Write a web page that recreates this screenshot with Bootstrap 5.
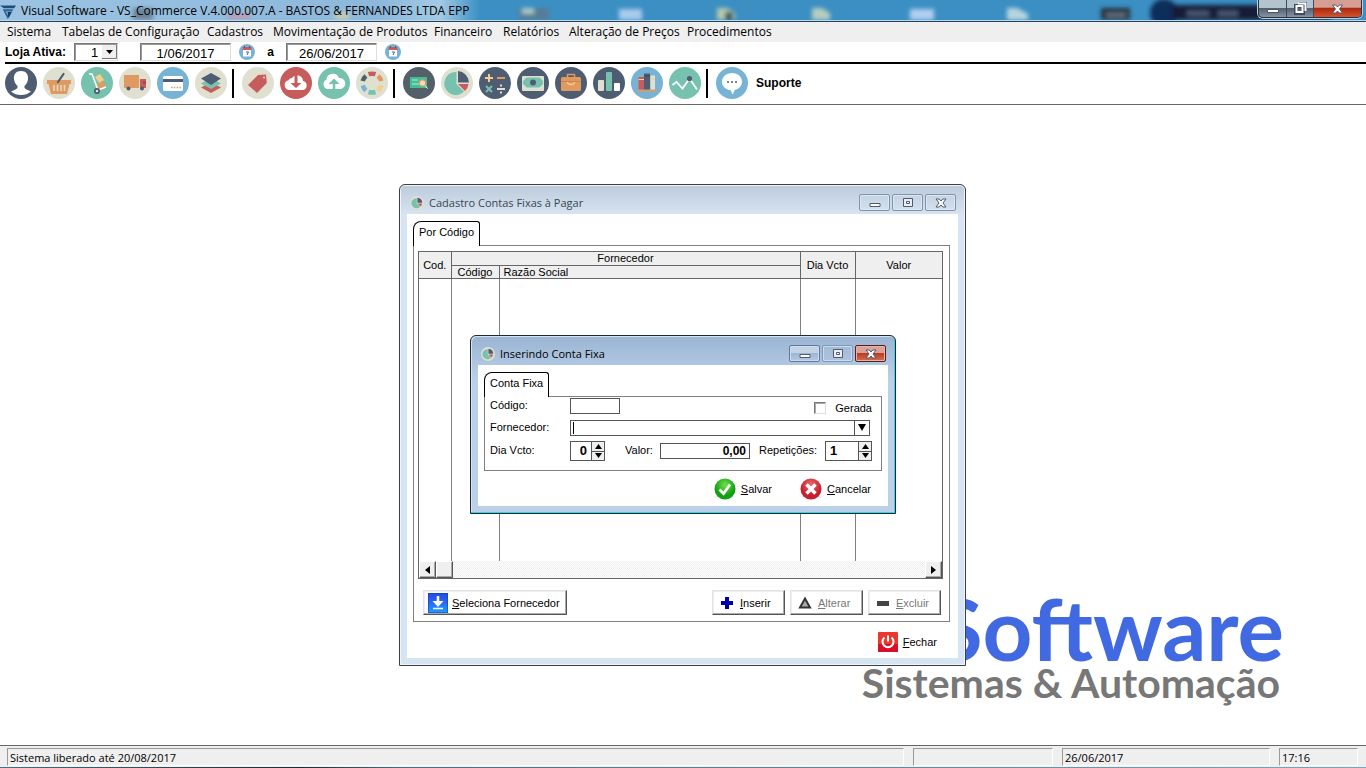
<!DOCTYPE html>
<html lang="pt-BR">
<head>
<meta charset="utf-8">
<meta name="viewport" content="width=device-width, initial-scale=1">
<title>Visual Software - VS_Commerce</title>
<link href="https://cdn.jsdelivr.net/npm/bootstrap@5.3.0/dist/css/bootstrap.min.css" rel="stylesheet">
<style>
  body { font: 12px/16px "Liberation Sans", Arial, sans-serif; color: #000; background: #fff; overflow: hidden; }
  button, input, select { font: inherit; color: inherit; }
  svg { display: block; flex: none; }
  .ui-font { font-family: "Open Sans", "Noto Sans", sans-serif; font-size: 12px; }
  .ui-small { font-size: 11px; }
  .form-font { font-size: 11px; line-height: 14px; }

  /* application title bar */
  .app-title { height: 22px; position: relative; overflow: hidden; border-bottom: 1px solid #23445f; box-shadow: inset 0 -1px #b9d6ea;
    background: linear-gradient(90deg, #9cc3e2 0, #8cb8db 380px, #a3cae4 440px, #3b8fc3 480px); }
  .app-title > * { position: relative; }
  .app-title .glass { position: absolute; left: 0; top: 0; }
  .app-controls { border: 1px solid #26333f; border-top: 0; border-radius: 0 0 5px 5px; height: 18px; overflow: hidden; box-shadow: 0 0 0 1px #b9cede; }
  .app-controls button { border: 0; padding: 0; height: 17px; display: flex; align-items: center; justify-content: center;
    background: linear-gradient(#b4c4ce 0 45%, #52606f 50%, #8794a4); border-right: 1px solid #3d4b59; }
  .app-controls .quit { background: linear-gradient(#d69d92 0 42%, #ab2a12 50%, #d8532c); border-right: 0; }

  .app-menu { height: 20px; background: #efefef; padding-left: 7px; display: grid; align-items: center;
    grid-template-columns: 55px 145px 66px 161px 69px 66px 118px auto; }
  .app-menu a { color: #000; text-decoration: none; white-space: nowrap; }

  .filters { height: 20px; padding-left: 5px; }
  .sunken { border: 1px solid #ddd; border-top-color: #777; border-left-color: #777; box-shadow: inset 1px 1px #999; background: #fff; border-radius: 0; height: 18px; }
  .filters input { width: 91px; font-size: 13px; text-align: center; padding: 2px 0 0; }
  .store { width: 44px; position: relative; margin-right: 22px; }
  .store select { appearance: none; width: 44px; padding: 1px 0 0 16px; font-size: 13px; line-height: 14px; }
  .store svg { position: absolute; right: 1px; top: 2px; pointer-events: none; }
  .icon-btn { border: 0; background: none; padding: 0; display: flex; }
  .tools { border-top: 2px solid #000; margin-left: 5px; padding: 3px 0 5px; gap: 6px; }
  .tools-line { border-bottom: 1px solid #666; }
  .tools .bar { width: 2px; height: 29px; background: #000; margin: 0 2px 0 -1px; }

  /* child windows */
  .win { position: absolute; border: 1px solid #3c4043; border-radius: 6px 6px 0 0; padding: 0 7px 7px; background: #d7e4f2;
    box-shadow: inset 0 0 0 1px #eef4fa; }
  .win-list { left: 399px; top: 79px; width: 567px; background: linear-gradient(#bccbda, #d7e4f2 30px); color: #3c4650; }
  .win-form { left: 470px; top: 230px; width: 426px; border-color: #1c2a2c; background: linear-gradient(#9ab4d2, #bbd1ea 45px);
    box-shadow: inset -1px -1px #35d3ee, inset 1px 1px #d5e4f2; }
  .win-head { height: 29px; padding: 7px 2px 0 3px; }
  .win-title { padding-left: 5px; line-height: 21px; }
  .win-head button { width: 31px; height: 17px; padding: 0; border: 1px solid #8292a8; border-radius: 2px; background: transparent;
    box-shadow: inset 0 0 0 1px #dbe7f3; display: flex; align-items: center; justify-content: center; margin-top: 2px; }
  .win-form .win-head button { border-color: #63799a; background: linear-gradient(#c3d3e6 45%, #9db6d3 50%, #b4cae2); box-shadow: inset 0 0 0 1px #ccdcec; }
  .win-form .win-head .idle { border-color: #7f97b8; background: transparent; }
  .win-form .win-head .shut { border-color: #591d1a; background: linear-gradient(#dba096 45%, #ba3c25 50%, #d17252); box-shadow: inset 0 0 0 1px #e3b5aa; }
  .client { background: #fff; color: #000; padding: 7px 8px 0 6px; }
  .tab-top { position: relative; z-index: 1; height: 25px; border: 1px solid #000; border-bottom: 0; border-radius: 8px 3px 0 0; background: #fff; padding: 3px 0 0 5px; margin-bottom: -1px; white-space: nowrap; }
  .pane { border: 1px solid #808080; }

  .win-list .client { height: 444px; }
  .win-list .tab-top { width: 67px; }
  .win-list .pane { height: 377px; padding: 5px 6px 0 4px; }
  .grid-box { border: 1px solid #666; height: 328px; }
  .grid-box table { width: 100%; table-layout: fixed; border-collapse: collapse; }
  .grid-box th { background: #efefef; font-weight: 400; text-align: center; padding: 0; border: 1px solid #666; line-height: 12px; height: 13px; overflow: hidden; white-space: nowrap; }
  .grid-box td { border: 1px solid #808080; border-width: 0 1px; height: 283px; padding: 0; }
  .grid-box tr > :first-child.edge { border-left: 0; }
  .grid-box .edge-r { border-right: 0; }
  .grid-box thead tr:first-child th { border-top: 0; }
  .track { height: 17px; background: repeating-conic-gradient(#eee 0 25%, #fff 0 50%) 0 0 / 2px 2px; }
  .track button, .track .thumb { width: 17px; height: 17px; padding: 0; border: 1px solid #fff; border-right-color: #555; border-bottom-color: #555; background: #efefef; box-shadow: inset -1px -1px #aaa;
    display: flex; align-items: center; justify-content: center; }
  .raised { height: 25px; background: #fff; border: 1px solid #e3e3e3; border-right-color: #555; border-bottom-color: #555; box-shadow: inset -1px -1px #aaa, inset 1px 1px #eee; padding: 0; display: flex; align-items: center; }
  .raised:disabled { color: #777; }
  .act { width: 73px; padding-left: 7px; gap: 6px; }
  .act svg { width: 14px; height: 14px; }
  .act-row { margin-top: 11px; padding: 0 2px 0 5px; gap: 5px; }
  .pick { width: 144px; padding-left: 4px; gap: 4px; }
  .plain { border: 0; background: none; padding: 0; display: flex; align-items: center; gap: 5px; }

  .win-form .client { height: 141px; padding-right: 6px; }
  .win-form .tab-top { width: 65px; }
  .win-form .pane { height: 75px; padding: 0 9px 0 5px; }
  .line-row { display: flex; align-items: center; height: 22px; }
  .line-row label { margin-top: -2px; }
  .cap { width: 80px; flex: none; }
  .boxed { border: 1px solid #555; background: #fff; border-radius: 0; height: 16px; padding: 0 3px; min-width: 0; }
  .num { font-weight: 700; font-size: 12px; }
  .stepper { border: 1px solid #555; height: 20px; display: flex; }
  .stepper input { border: 0; padding: 0; font-weight: 700; font-size: 13px; background: #fff; min-width: 0; }
  .stepper .keys { width: 13px; border-left: 1px solid #555; display: flex; flex-direction: column; background: #efefef; }
  .stepper .keys button { flex: 1; border: 0; padding: 0; background: none; display: flex; align-items: center; justify-content: center; }
  .stepper .keys button + button { border-top: 1px solid #555; }
  .tick { appearance: none; width: 12px; height: 12px; margin: 4px 9px 0 0; border: 1px solid #ddd; border-top-color: #777; border-left-color: #777; box-shadow: inset 1px 1px #aaa; }
  .line-row .tick + label { margin-top: 3px; }
  .caret-mark { position: absolute; left: 3px; top: 2px; width: 1px; height: 12px; background: #000; }

  /* wallpaper logo */
  .brand { font-family: Lato, sans-serif; font-weight: 700; padding: 0 82px 43px 0; }
  .brand-name { font-size: 87px; line-height: 72px; color: #4169e1; }
  .brand-sub { font-size: 41px; line-height: 38px; color: #777; white-space: nowrap; margin-right: 4px; }

  .status { background: #efefef; border-top: 1px solid #666; padding: 2px 8px 1px 7px; height: 22px; display: grid; grid-template-columns: 897px 1fr 208px 79px; gap: 9px; }
  .status > div { border: 1px solid #fff; border-top-color: #999; border-left-color: #999; padding-left: 2px; line-height: 17px; height: 18px; white-space: nowrap; }
  .under { height: 1px; background: linear-gradient(90deg, #4a6e84, #1b2b38 300px, #4a6e84 400px, #7ba4bd); }
</style>
</head>
<body class="d-flex flex-column vh-100">

<svg width="0" height="0" class="position-absolute" aria-hidden="true">
  <defs>
    <symbol id="pie" viewBox="0 0 32 32"><circle cx="16" cy="16" r="16" fill="#e0e0d1"/><path d="M15.500 5a11.500 11.500 0 1 0 7.500 19.500L15.500 17z" fill="#76c2af"/><path d="M17 4v11.500h11A12 12 0 0 0 17 4z" fill="#4f5d73"/><path d="M17 17h10.500a11 11 0 0 1-3.500 7z" fill="#c75c5c"/></symbol>
    <symbol id="cal" viewBox="0 0 16 16"><circle cx="8" cy="8" r="8" fill="#77b3d4"/><path d="M4 5h8v7.500H4z" fill="#fff"/><path d="M3.500 3h9v3h-9z" fill="#c75c5c"/><path d="M5.500 2v2M10.500 2v2" stroke="#4f5d73"/><path d="M7 8h2.500L8 11" fill="none" stroke="#4f5d73"/></symbol>
    <symbol id="g-min" viewBox="0 0 12 12"><path d="M1 6.500h10v3H1z" fill="#fff" stroke="#515a6e"/></symbol>
    <symbol id="g-max" viewBox="0 0 12 12"><path d="M1.500 1.500h9v8h-9z" fill="#e8eef5" stroke="#515a6e"/><path d="M4.500 4.500h3v2h-3z" fill="#fff" stroke="#515a6e"/></symbol>
    <symbol id="g-x" viewBox="0 0 12 12"><path d="M1 2h3.200L6 4l1.800-2H11L8 6l3 4H7.800L6 8l-1.800 2H1l3-4z" fill="#fff" stroke="#515a6e"/></symbol>
  </defs>
</svg>

<header>
  <div class="app-title d-flex align-items-start ui-font">
    <svg class="glass" width="1366" height="20" viewBox="0 0 1366 20" aria-hidden="true"><defs><filter id="soft" x="-20%" y="-50%" width="140%" height="200%"><feGaussianBlur stdDeviation="2"/></filter></defs>
      <g filter="url(#soft)"><path d="M133 8h20v12h-20z" fill="#6d8396"/><path d="M228 13h22v7h-22z" fill="#b49fb8"/><path d="M335 12h14v8h-14z" fill="#c5cbb4"/><path d="M519 8h30v12h-30z" fill="#577d95"/><path d="M522 8h12v6h-12z" fill="#a9c8c8"/><path d="M619 9h23v11h-23z" fill="#a9cbee"/><path d="M717 8h10l8 5v7h-18z" fill="#b6c9ae"/><path d="M725 12h8v8h-8z" fill="#43565c"/><path d="M812 8h10l8 5v7h-18z" fill="#b5cdc0"/><path d="M910 9h24v11h-24z" fill="#b0cff0"/><path d="M1007 8h10l11 6v6h-21z" fill="#b8d4df"/><path d="M1101 8h29v12h-29z" fill="#26333f"/><path d="M1106 13h20v4h-20z" fill="#66727b"/><circle cx="1164" cy="13" r="14" fill="#0d2f5a"/><path d="M1172 5h160v15h-160z" fill="#151f38"/><path d="M1187 11h22v5h-22zM1218 11h20v5h-20z" fill="#4b5a74"/></g></svg>
    <svg class="mt-1" width="17" height="16" viewBox="0 0 18 16"><path d="M0 1h17l-2 3H4z" fill="#1d4e7d"/><path d="M3 5h11l-1 2.500H6l3 5-1 3z" fill="#2a6595"/><path d="M8 8h4.500L9 15z" fill="#123c67"/></svg>
    <span class="flex-grow-1 ps-1" style="line-height:21px">Visual Software - VS_Commerce V.4.000.007.A - BASTOS &amp; FERNANDES LTDA EPP</span>
    <div class="app-controls d-flex me-1">
      <button style="width:28px" aria-label="Minimizar"><svg width="12" height="12" viewBox="0 0 12 12"><path d="M.5 6.500h11v3H.5z" fill="#fff" stroke="#4b5563"/></svg></button>
      <button style="width:27px" aria-label="Restaurar"><svg width="13" height="13" viewBox="0 0 13 13"><path d="M5 1.500h6.500V8M2 4h7v7H2z" fill="none" stroke="#434b5c" stroke-width="4"/><path d="M4 1.500h7.500V9M2.500 4h6v6h-6z" fill="none" stroke="#fff" stroke-width="2"/></svg></button>
      <button class="quit" style="width:47px" aria-label="Fechar programa"><svg width="13" height="12"><use href="#g-x"/></svg></button>
    </div>
  </div>

  <nav class="app-menu ui-font">
    <a href="#">Sistema</a><a href="#">Tabelas de Configuração</a><a href="#">Cadastros</a><a href="#">Movimentação de Produtos</a><a href="#">Financeiro</a><a href="#">Relatórios</a><a href="#">Alteração de Preços</a><a href="#">Procedimentos</a>
  </nav>

  <div class="filters d-flex align-items-center">
    <label for="store" class="fw-bold" style="width:69px">Loja Ativa:</label>
    <div class="store">
      <select id="store" class="sunken"><option>1</option></select>
      <svg width="15" height="14" viewBox="0 0 15 14"><path d="M0 0h15v14H0z" fill="#efefef"/><path d="M0 13.500h14.500V0" fill="none" stroke="#777"/><path d="M4 5h7L7.500 9z"/></svg>
    </div>
    <input class="sunken" aria-label="Data inicial" value="1/06/2017">
    <button class="icon-btn ms-2" aria-label="Calendário inicial"><svg width="16" height="16"><use href="#cal"/></svg></button>
    <label for="until" class="fw-bold text-center" style="width:31px">a</label>
    <input id="until" class="sunken" value="26/06/2017">
    <button class="icon-btn ms-2" aria-label="Calendário final"><svg width="16" height="16"><use href="#cal"/></svg></button>
  </div>

  <div class="tools-line">
  <div class="tools d-flex align-items-center">
    <button class="icon-btn" aria-label="Clientes"><svg width="32" height="32" viewBox="0 0 32 32"><circle cx="16" cy="16" r="16" fill="#4f5d73"/><path d="M16 4c-5 0-7.500 3.500-7 8 .3 3 1.500 5 3.500 7 .5 2-.5 3-2.500 3.700L6 24.500C9 27 12 28 16 28s7-1 10-3.500l-4-1.800c-2-.7-3-1.700-2.500-3.700 2-2 3.200-4 3.500-7 .5-4.500-2-8-7-8z" fill="#fff"/></svg></button>
    <button class="icon-btn" aria-label="Compras"><svg width="32" height="32" viewBox="0 0 32 32"><circle cx="16" cy="16" r="16" fill="#e0e0d1"/><path d="M4 13h24v4h-1.500L24 27H8L5.500 17H4z" fill="#e0995e"/><path d="M11 18v6M14.500 18v6M18 18v6M21.500 18v6" stroke="#e0e0d1" stroke-width="1.500"/><path d="M20.500 7L15 15" stroke="#4f5d73" stroke-width="2.200" stroke-linecap="round"/></svg></button>
    <button class="icon-btn" aria-label="Estoque"><svg width="32" height="32" viewBox="0 0 32 32"><circle cx="16" cy="16" r="16" fill="#76c2af"/><path d="M14 10l5-3 4 6-5 3z" fill="#f5cf87"/><path d="M16 17l6-3 3 6-7 3z" fill="#e0995e"/><path d="M8 7h3l6 16 8-3" fill="none" stroke="#fff" stroke-width="1.500"/><circle cx="16" cy="24" r="2.200" fill="#e0e0d1" stroke="#4f5d73" stroke-width="1.800"/></svg></button>
    <button class="icon-btn" aria-label="Entregas"><svg width="32" height="32" viewBox="0 0 32 32"><circle cx="16" cy="16" r="16" fill="#e0e0d1"/><path d="M5 8h15v13H5z" fill="#e0995e"/><path d="M21 12h6v9h-6z" fill="#c75c5c"/><path d="M24 14h3v3h-3z" fill="#a34b50"/><circle cx="9.500" cy="21.500" r="2" fill="#4f5d73"/><circle cx="23" cy="21.500" r="2" fill="#4f5d73"/></svg></button>
    <button class="icon-btn" aria-label="Cartões"><svg width="32" height="32" viewBox="0 0 32 32"><circle cx="16" cy="16" r="16" fill="#77b3d4"/><rect x="6" y="9" width="20" height="15" rx="1.500" fill="#fff"/><path d="M6 12h20v3H6z" fill="#4f5d73"/><path d="M14 20.500h10" stroke="#e0995e" stroke-width="1.500" stroke-dasharray="1.500 1.300"/></svg></button>
    <button class="icon-btn" aria-label="Camadas"><svg width="32" height="32" viewBox="0 0 32 32"><circle cx="16" cy="16" r="16" fill="#e0e0d1"/><path d="M16 15l10 5.500L16 26 6 20.500z" fill="#c75c5c"/><path d="M16 11l10 5.500L16 22 6 16.500z" fill="#76c2af"/><path d="M16 6l10 5.500L16 18 6 11.500z" fill="#4f5d73"/></svg></button>
    <span class="bar"></span>
    <button class="icon-btn" aria-label="Etiquetas"><svg width="32" height="32" viewBox="0 0 32 32"><circle cx="16" cy="16" r="16" fill="#e0e0d1"/><path d="M6 18L16 8l8-.5.8 8.500L15 26z" fill="#c75c5c"/><circle cx="22" cy="10.500" r="1" fill="#e0e0d1"/></svg></button>
    <button class="icon-btn" aria-label="Baixar"><svg width="32" height="32" viewBox="0 0 32 32"><circle cx="16" cy="16" r="16" fill="#c75c5c"/><path d="M9 23a5 5 0 0 1-.6-9.800A4 4 0 0 1 12 11a6 6 0 0 1 11 3 4.600 4.600 0 0 1 0 9z" fill="#fff"/><path d="M14.500 7h3v9h4L16 21l-5.500-5h4z" fill="#c75c5c"/></svg></button>
    <button class="icon-btn" aria-label="Enviar"><svg width="32" height="32" viewBox="0 0 32 32"><circle cx="16" cy="16" r="16" fill="#76c2af"/><path d="M9 22a5 5 0 0 1-.6-9.300A6.500 6.500 0 0 1 21 11a5.600 5.600 0 0 1 2 11z" fill="#fff"/><path d="M14.800 26v-9h-4.300L16 11.500l5.500 5.500h-4.200v9z" fill="#76c2af"/></svg></button>
    <button class="icon-btn" aria-label="Ciclo"><svg width="32" height="32" viewBox="0 0 32 32"><circle cx="16" cy="16" r="16" fill="#e0e0d1"/><g fill="none" stroke-width="4.500"><path d="M12.500 7.200q3.500-1 7 0" stroke="#c75c5c"/><path d="M22 9q2.500 2 3.300 5" stroke="#e0995e"/><path d="M25.300 18.500q-1 3-3.300 5" stroke="#f5cf87"/><path d="M12.500 25q3.500 1 7 0" stroke="#76c2af"/><path d="M6.700 18.500q1 3 3.300 5" stroke="#77b3d4"/><path d="M10 9q-2.500 2-3.300 5" stroke="#4f5d73"/></g></svg></button>
    <span class="bar"></span>
    <button class="icon-btn" aria-label="Consulta"><svg width="32" height="32" viewBox="0 0 32 32"><circle cx="16" cy="16" r="16" fill="#555f69"/><path d="M7 10h17v11H7z" fill="#3fbf95"/><path d="M9 13h6M9 17h8" stroke="#b8ecd9"/><circle cx="19.500" cy="16" r="3.200" fill="#eadfc5" stroke="#e0995e" stroke-width="1.200"/><path d="M22 18.500l2.500 3" stroke="#fff"/></svg></button>
    <button class="icon-btn" aria-label="Contas"><svg width="32" height="32"><use href="#pie"/></svg></button>
    <button class="icon-btn" aria-label="Cálculos"><svg width="32" height="32" viewBox="0 0 32 32"><circle cx="16" cy="16" r="16" fill="#4f5d73"/><g fill="none" stroke-width="2"><path d="M6 11h8M10 7v8" stroke="#f5cf87"/><path d="M18 11h8" stroke="#e0995e"/><path d="M7 19l6 6M13 19l-6 6" stroke="#76c2af"/><path d="M18 22h8M22 17.500v2M22 24.500v2" stroke="#e0e0d1"/></g></svg></button>
    <button class="icon-btn" aria-label="Caixa"><svg width="32" height="32" viewBox="0 0 32 32"><circle cx="16" cy="16" r="16" fill="#4f5d73"/><rect x="5" y="9" width="22" height="15" rx="1" fill="#e0e0d1"/><path d="M6 10.500h20v10H6z" fill="#76c2af"/><path d="M6 10h4l-4 4zM26 10h-4l4 4zM6 21h4l-4-4zM26 21h-4l4-4z" fill="#e0e0d1"/><circle cx="16" cy="15.500" r="3" fill="#4f5d73"/></svg></button>
    <button class="icon-btn" aria-label="Negócios"><svg width="32" height="32" viewBox="0 0 32 32"><circle cx="16" cy="16" r="16" fill="#4f5d73"/><path d="M12.500 11V7.500h7V11" fill="none" stroke="#e0995e" stroke-width="1.500"/><rect x="6" y="10" width="20" height="14" rx="1.500" fill="#e0995e"/><path d="M6 14.500h20" stroke="#c9834d"/><path d="M12.500 15a3.500 2.500 0 0 0 7 0" fill="none" stroke="#f5cf87" stroke-width="1.300"/></svg></button>
    <button class="icon-btn" aria-label="Gráficos"><svg width="32" height="32" viewBox="0 0 32 32"><circle cx="16" cy="16" r="16" fill="#4f5d73"/><rect x="5" y="13" width="6" height="11" rx="1" fill="#e0e0d1"/><rect x="13" y="5" width="6" height="19" rx="1" fill="#76c2af"/><rect x="21" y="16" width="6" height="8" rx="1" fill="#fff"/></svg></button>
    <button class="icon-btn" aria-label="Livros"><svg width="32" height="32" viewBox="0 0 32 32"><circle cx="16" cy="16" r="16" fill="#77b3d4"/><path d="M6 22.500h20v2H6z" fill="#e0995e"/><path d="M7.500 10H13v12.500H7.500z" fill="#c75c5c"/><path d="M13 6.500h6v16h-6z" fill="#4f5d73"/><path d="M19.500 8.500H24v14h-4.500z" fill="#e0e0d1"/><path d="M7.500 12.500H13M19.500 12H24" stroke="#f5cf87"/><path d="M13 9h6" stroke="#3a4557"/></svg></button>
    <button class="icon-btn" aria-label="Indicadores"><svg width="32" height="32" viewBox="0 0 32 32"><circle cx="16" cy="16" r="16" fill="#76c2af"/><path d="M3.500 18l4-3 6 6.500 7-10 7.500 11M15 21.500" fill="none" stroke="#fff" stroke-width="1.800"/><circle cx="20.500" cy="11.500" r="2.600" fill="#4f5d73"/></svg></button>
    <span class="bar"></span>
    <button class="icon-btn align-items-center gap-2 fw-bold"><svg width="32" height="32" viewBox="0 0 32 32"><circle cx="16" cy="16" r="16" fill="#77b3d4"/><path d="M16 6c-6 0-10 4-10 8.700 0 4.500 3.800 8 8.800 8.500l1.700 4.300 2.500-4.700c4-1 7-4 7-8.100C26 10 22 6 16 6z" fill="#fff"/><path d="M11 15h2M15 15h2M19 15h2" stroke="#4f5d73" stroke-width="1.600"/></svg>Suporte</button>
  </div>
  </div>
</header>

<main class="flex-grow-1 position-relative d-flex align-items-end justify-content-end">
  <div class="brand text-end"><div class="brand-name">Software</div><div class="brand-sub">Sistemas &amp; Automação</div></div>

  <section class="win win-list">
    <div class="win-head d-flex">
      <svg class="mt-1" width="14" height="14"><use href="#pie"/></svg>
      <span class="win-title ui-font ui-small flex-grow-1">Cadastro Contas Fixas à Pagar</span>
      <div class="d-flex" style="gap:2px"><button aria-label="Minimizar"><svg width="12" height="12"><use href="#g-min"/></svg></button><button aria-label="Maximizar"><svg width="12" height="12"><use href="#g-max"/></svg></button><button aria-label="Fechar janela"><svg width="12" height="12"><use href="#g-x"/></svg></button></div>
    </div>
    <div class="client form-font">
      <div class="tab-top">Por Código</div>
      <div class="pane">
        <div class="grid-box">
          <table>
            <colgroup><col style="width:32px"><col style="width:48px"><col><col style="width:55px"><col style="width:87px"></colgroup>
            <thead>
              <tr><th rowspan="2" class="edge">Cod.</th><th colspan="2">Fornecedor</th><th rowspan="2">Dia Vcto</th><th rowspan="2" class="edge-r">Valor</th></tr>
              <tr><th>Código</th><th class="text-start ps-1">Razão Social</th></tr>
            </thead>
            <tbody><tr><td class="edge"></td><td></td><td></td><td></td><td class="edge-r"></td></tr></tbody>
          </table>
          <div class="track d-flex">
            <button aria-label="Rolar à esquerda"><svg width="5" height="8" viewBox="0 0 5 8"><path d="M5 0v8L0 4z"/></svg></button><span class="thumb"></span>
            <button class="ms-auto" aria-label="Rolar à direita"><svg width="5" height="8" viewBox="0 0 5 8"><path d="M0 0v8l5-4z"/></svg></button>
          </div>
        </div>
        <div class="act-row d-flex">
          <button class="raised pick me-auto"><svg width="20" height="20" viewBox="0 0 20 20"><defs><linearGradient id="bl" x2="0" y2="1"><stop stop-color="#1c4fe0"/><stop offset=".4" stop-color="#2b62ee"/><stop offset="1" stop-color="#16a2ff"/></linearGradient></defs><rect width="20" height="20" rx="1" fill="url(#bl)" stroke="#1533b8"/><path d="M10 3v8" stroke="#fff" stroke-width="2.500"/><path d="M4.500 8h11L10 14z" fill="#fff"/><path d="M5 15.500h10" stroke="#fff" stroke-width="1.500"/></svg><span><u>S</u>eleciona Fornecedor</span></button>
          <button class="raised act"><svg viewBox="0 0 14 14"><path d="M5 1h4v4h4v4H9v4H5V9H1V5h4z" fill="#0000a8"/></svg><span><u>I</u>nserir</span></button>
          <button class="raised act" disabled><svg viewBox="0 0 14 14"><path d="M7 2.500l5 9H2z" fill="#aaa" stroke="#333" stroke-width="2"/></svg><span><u>A</u>lterar</span></button>
          <button class="raised act" disabled><svg viewBox="0 0 14 14"><path d="M1 5h12v5H1z" fill="#444"/></svg><span><u>E</u>xcluir</span></button>
        </div>
      </div>
      <div class="d-flex justify-content-end" style="padding:10px 13px 0 0">
        <button class="plain"><svg width="20" height="20" viewBox="0 0 20 20"><rect width="20" height="20" rx="1" fill="#e8392c"/><path d="M0 12h20v8H0z" fill="#d90f2a"/><path d="M10 3.500v6M6.500 5.500a5.500 5.500 0 1 0 7 0" fill="none" stroke="#fff" stroke-width="2"/></svg><span><u>F</u>echar</span></button>
      </div>
    </div>
  </section>

  <section class="win win-form">
    <div class="win-head d-flex">
      <svg class="mt-1" width="14" height="14"><use href="#pie"/></svg>
      <span class="win-title ui-font ui-small flex-grow-1">Inserindo Conta Fixa</span>
      <div class="d-flex" style="gap:2px"><button aria-label="Minimizar"><svg width="12" height="12"><use href="#g-min"/></svg></button><button class="idle" aria-label="Maximizar"><svg width="12" height="12"><use href="#g-max"/></svg></button><button class="shut" aria-label="Fechar janela"><svg width="12" height="12"><use href="#g-x"/></svg></button></div>
    </div>
    <form class="client form-font">
      <div class="tab-top">Conta Fixa</div>
      <div class="pane">
        <div class="line-row" style="height:18px">
          <label class="cap" for="cod">Código:</label><input id="cod" class="boxed" style="width:50px">
          <input type="checkbox" class="tick ms-auto" id="ger"><label for="ger">Gerada</label>
        </div>
        <div class="line-row" style="height:25px">
          <label class="cap" for="forn">Fornecedor:</label>
          <div class="position-relative d-flex" style="width:300px">
            <input id="forn" class="boxed flex-grow-1"><span class="caret-mark"></span>
            <button type="button" class="boxed p-0 d-flex align-items-center justify-content-center border-start-0" style="width:15px" aria-label="Abrir lista"><svg width="8" height="7" viewBox="0 0 8 7"><path d="M0 0h8L4 7z"/></svg></button>
          </div>
        </div>
        <div class="line-row">
          <label class="cap" for="dia">Dia Vcto:</label>
          <div class="stepper" style="width:35px"><input id="dia" class="flex-grow-1 text-end pe-1" style="width:10px" value="0"><span class="keys"><button type="button" aria-label="Mais dia"><svg width="7" height="5" viewBox="0 0 7 5"><path d="M0 5h7L3.500 0z"/></svg></button><button type="button" aria-label="Menos dia"><svg width="7" height="5" viewBox="0 0 7 5"><path d="M0 0h7L3.500 5z"/></svg></button></span></div>
          <label for="val" style="width:35px;margin-left:20px">Valor:</label>
          <input id="val" class="boxed num text-end" style="width:90px" value="0,00">
          <label for="rep" style="width:66px;margin-left:9px">Repetições:</label>
          <div class="stepper" style="width:47px"><input id="rep" class="flex-grow-1 ps-1" style="width:10px" value="1"><span class="keys"><button type="button" aria-label="Mais repetições"><svg width="7" height="5" viewBox="0 0 7 5"><path d="M0 5h7L3.500 0z"/></svg></button><button type="button" aria-label="Menos repetições"><svg width="7" height="5" viewBox="0 0 7 5"><path d="M0 0h7L3.500 5z"/></svg></button></span></div>
        </div>
      </div>
      <div class="d-flex justify-content-end" style="gap:28px;padding:7px 11px 0 0">
        <button type="button" class="plain"><svg width="22" height="22" viewBox="0 0 22 22"><defs><radialGradient id="gr" cy=".3"><stop stop-color="#6ee04a"/><stop offset="1" stop-color="#12a012"/></radialGradient></defs><circle cx="11" cy="11" r="10.500" fill="url(#gr)"/><path d="M5.500 11.500l4 4 6.500-9" fill="none" stroke="#fff" stroke-width="2.800"/></svg><span><u>S</u>alvar</span></button>
        <button type="button" class="plain"><svg width="22" height="22" viewBox="0 0 22 22"><defs><radialGradient id="rd" cy=".3"><stop stop-color="#ee6a6e"/><stop offset="1" stop-color="#c5202c"/></radialGradient></defs><circle cx="11" cy="11" r="10.500" fill="url(#rd)"/><path d="M6.500 6.500l9 9M15.500 6.500l-9 9" stroke="#fff" stroke-width="3.400"/></svg><span><u>C</u>ancelar</span></button>
      </div>
    </form>
  </section>
</main>

<footer>
  <div class="status ui-font ui-small"><div>Sistema liberado até 20/08/2017</div><div></div><div>26/06/2017</div><div>17:16</div></div>
  <div class="under"></div>
</footer>
<script src="https://cdn.jsdelivr.net/npm/bootstrap@5.3.0/dist/js/bootstrap.bundle.min.js"></script>
</body>
</html>
